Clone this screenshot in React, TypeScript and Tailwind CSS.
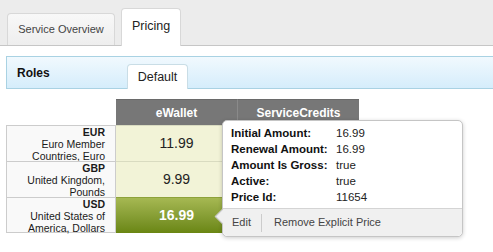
import React from "react";

const rows = [
  { code: "EUR", name: ["Euro Member", "Countries, Euro"], price: "11.99", active: false },
  { code: "GBP", name: ["United Kingdom,", "Pounds"], price: "9.99", active: false },
  { code: "USD", name: ["United States of", "America, Dollars"], price: "16.99", active: true },
];

const details: [string, string][] = [
  ["Initial Amount:", "16.99"],
  ["Renewal Amount:", "16.99"],
  ["Amount Is Gross:", "true"],
  ["Active:", "true"],
  ["Price Id:", "11654"],
];

export default function App() {
  return (
    <div className="relative w-[493px] h-[252px] overflow-hidden bg-white font-['Liberation_Sans',Arial,sans-serif] text-[#1a1a1a]">
      {/* top tabs */}
      <div className="h-[46px] bg-[#ececec] border-b border-[#c6c6c6] flex items-end pl-[7px] gap-[6px]">
        <div className="h-[32px] w-[108px] rounded-t-[4px] border border-b-0 border-[#d8d8d8] bg-gradient-to-b from-[#f8f8f8] to-[#eeeeee] flex items-center justify-center text-[11px] text-[#444] pb-[1px]">
          Service Overview
        </div>
        <div className="h-[38px] w-[60px] -mb-px rounded-t-[4px] border border-b-0 border-[#d8d8d8] bg-white flex items-center justify-center text-[12.5px] text-[#222] pb-[2px]">
          Pricing
        </div>
      </div>

      {/* roles bar */}
      <div className="mt-[10px] ml-[6px] h-[33px] border-y border-l border-[#a9d2e3] bg-gradient-to-b from-[#f1f9fe] to-[#d5edfb] flex items-stretch">
        <div className="w-[120px] pl-[10px] flex items-center text-[12px] font-bold text-[#111]">Roles</div>
        <div className="self-end -mb-px h-[25px] w-[61px] rounded-t-[4px] border border-b-0 border-[#c9dde6] bg-white flex items-center justify-center text-[12.5px] text-[#222] pt-[1px]">
          Default
        </div>
      </div>

      {/* table */}
      <div className="mt-[10px] ml-[6px] grid grid-cols-[110px_121px_122px]">
        <div className="h-[26px]" />
        <div className="h-[26px] bg-[#777777] border-t border-[#6a6a6a] flex items-center justify-center text-[12px] font-bold text-white">
          eWallet
        </div>
        <div className="h-[26px] bg-[#777777] border-t border-l border-[#6a6a6a] border-l-[#8a8a8a] flex items-center justify-center text-[12px] font-bold text-white">
          ServiceCredits
        </div>
        {rows.map((r, i) => (
          <React.Fragment key={r.code}>
            <div
              className={`h-[36px] bg-[#f9f9f9] border-l border-r border-t border-[#cccccc] ${i === rows.length - 1 ? "border-b" : ""} pr-[10px] text-right text-[10.5px] leading-[12px]`}
            >
              <div className="font-bold">{r.code}</div>
              <div>{r.name[0]}</div>
              <div>{r.name[1]}</div>
            </div>
            {r.active ? (
              <div className="h-[36px] bg-gradient-to-b from-[#a6b852] to-[#6a8612] border-t border-[#8ea23a] flex items-center justify-center text-[14px] font-bold text-white">
                {r.price}
              </div>
            ) : (
              <div className="h-[36px] bg-[#f2f3d7] border-t border-[#d9dbc0] flex items-center justify-center text-[14px] text-[#222]">
                {r.price}
              </div>
            )}
            <div className="h-[36px] bg-[#f2f3d7] border-t border-[#d9dbc0]" />
          </React.Fragment>
        ))}
      </div>

      {/* tooltip */}
      <div className="absolute left-[222px] top-[120px] w-[241px] h-[117px] rounded-[5px] border border-[#c5c5c5] bg-white shadow-[0_1px_4px_rgba(0,0,0,0.2)] flex flex-col">
        <div className="pt-[4px] pl-[8px] text-[11.5px] leading-[16px] flex-1">
          {details.map(([k, v]) => (
            <div key={k} className="flex h-[16px]">
              <div className="w-[105px] font-bold text-[#111]">{k}</div>
              <div className="text-[#222]">{v}</div>
            </div>
          ))}
        </div>
        <div className="h-[28px] border-t border-[#d4d4d4] bg-[#f0f0f0] rounded-b-[5px] flex items-center text-[11px] text-[#444]">
          <span className="ml-[9px]">Edit</span>
          <span className="ml-[10px] w-px h-[18px] bg-[#cccccc]" />
          <span className="ml-[12px]">Remove Explicit Price</span>
        </div>
        <div className="absolute left-[-6px] top-[90px] w-[11px] h-[11px] rotate-45 bg-[#f0f0f0] border-l border-b border-[#c5c5c5]" />
      </div>
    </div>
  );
}
